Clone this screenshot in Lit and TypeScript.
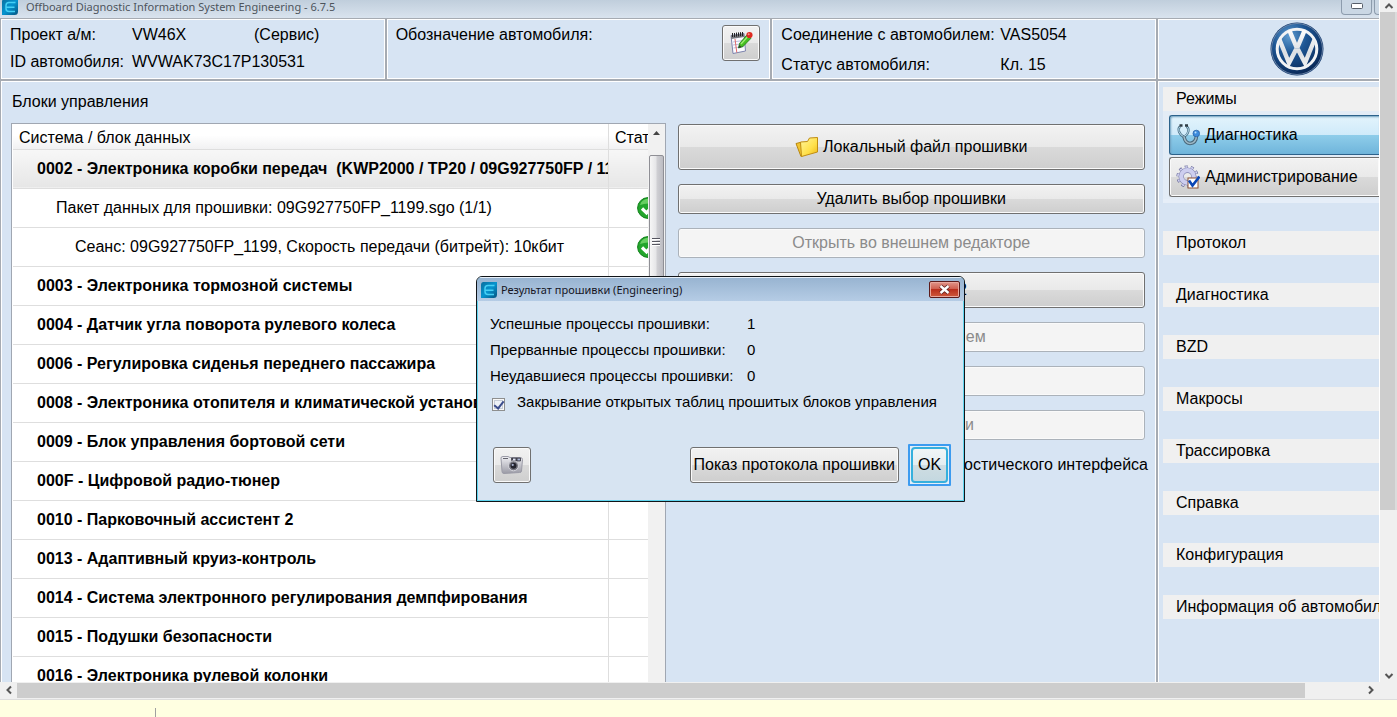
import { LitElement, html, css } from "lit";
import { customElement, property } from "lit/decorators.js";
import { classMap } from "lit/directives/class-map.js";

type Row = { text: string; level: number; selected?: boolean; ok?: boolean };

const ROWS: Row[] = [
  { text: "0002 - Электроника коробки передач  (KWP2000 / TP20 / 09G927750FP / 1199)", level: 0, selected: true },
  { text: "Пакет данных для прошивки: 09G927750FP_1199.sgo (1/1)", level: 1, ok: true },
  { text: "Сеанс: 09G927750FP_1199, Скорость передачи (битрейт): 10кбит", level: 2, ok: true },
  { text: "0003 - Электроника тормозной системы", level: 0 },
  { text: "0004 - Датчик угла поворота рулевого колеса", level: 0 },
  { text: "0006 - Регулировка сиденья переднего пассажира", level: 0 },
  { text: "0008 - Электроника отопителя и климатической установки", level: 0 },
  { text: "0009 - Блок управления бортовой сети", level: 0 },
  { text: "000F - Цифровой радио-тюнер", level: 0 },
  { text: "0010 - Парковочный ассистент 2", level: 0 },
  { text: "0013 - Адаптивный круиз-контроль", level: 0 },
  { text: "0014 - Система электронного регулирования демпфирования", level: 0 },
  { text: "0015 - Подушки безопасности", level: 0 },
  { text: "0016 - Электроника рулевой колонки", level: 0 },
];

const SECTIONS = ["Протокол", "Диагностика", "BZD", "Макросы", "Трассировка", "Справка", "Конфигурация", "Информация об автомобиле"];

const appIcon = html`<svg width="16" height="16" viewBox="0 0 16 16" aria-hidden="true">
  <defs><linearGradient id="a" x1="0" y1="0" x2="1" y2="1"><stop offset="0" stop-color="#0a6f9e"/><stop offset=".5" stop-color="#0594cf"/><stop offset="1" stop-color="#06537f"/></linearGradient></defs>
  <path d="M2.500 0H16V12.500Q16 16 12.500 16H0V3Q0 0 2.500 0Z" fill="url(#a)"/>
  <path d="M13.500 3.500H7Q4 3.500 4 6.500V9.500Q4 12.500 7 12.500H13M4.500 8.200H12.500" fill="none" stroke="#45d0f5" stroke-width="1.500"/>
</svg>`;

const noteIcon = html`<svg width="24" height="24" viewBox="0 0 24 24" aria-hidden="true">
  <path d="M2 4.500L15 2.500L16.500 20L4 22.500Z" fill="#fbfbff" stroke="#7d83ad"/>
  <path d="M2 4.500L15 2.500L15.300 6L2.300 8Z" fill="#77777d"/>
  <path d="M3.500 2V6M5.500 2V6M7.500 1.600V5.600M9.500 1.400V5.400M11.500 1.200V5.200M13.500 1V5" stroke="#222" stroke-width="1"/>
  <path d="M4 11L14 9.500M4 14L14.500 12.500M4.500 17L15 15.500" stroke="#b9bede"/>
  <path d="M6 8L7.800 21.500" stroke="#e26a6a"/>
  <path d="M9.500 17L10.500 12.500L18 3.800L22 7.300L14 15.500Z" fill="#45bf22" stroke="#1d7a10" stroke-width=".8"/>
  <path d="M12 13L19.500 4.800" stroke="#a1ee76" stroke-width="1.300"/>
  <path d="M9.500 17L10.300 14L12.500 15.900Z" fill="#333"/>
  <circle cx="20.500" cy="4" r="3.100" fill="#dd2a20"/><circle cx="19.700" cy="3.200" r="1" fill="#f99080"/>
</svg>`;

const vwLogo = html`<svg width="54" height="54" viewBox="0 0 54 54" role="img" aria-label="VW">
  <defs>
    <radialGradient id="v" cx=".35" cy=".25" r=".85"><stop offset="0" stop-color="#5f9bd0"/><stop offset=".4" stop-color="#1d5593"/><stop offset="1" stop-color="#06214e"/></radialGradient>
    <linearGradient id="w" gradientUnits="userSpaceOnUse" x1="0" y1="6" x2="0" y2="48"><stop offset="0" stop-color="#ffffff"/><stop offset=".6" stop-color="#dcdfe3"/><stop offset="1" stop-color="#f6f6f6"/></linearGradient>
    <clipPath id="c"><circle cx="27" cy="27" r="20"/></clipPath>
  </defs>
  <circle cx="27" cy="27" r="26.500" fill="#123a70"/>
  <circle cx="27" cy="27" r="25.500" fill="url(#v)" stroke="#8196b2" stroke-width=".8"/>
  <circle cx="27" cy="27" r="19.800" fill="none" stroke="#f2f3f5" stroke-width="3"/>
  <g clip-path="url(#c)" fill="none" stroke="url(#w)" stroke-width="4.400">
    <path d="M17.500 4L26 24H28L36.500 4"/>
    <path d="M6 9L19 41L25.500 28.500H28.500L35 41L48 9"/>
  </g>
</svg>`;

const stethoscope = html`<svg width="24" height="24" viewBox="0 0 24 24" aria-hidden="true">
  <path d="M4 3.500Q2 5 3 8.500Q5 13 7.500 13.500Q11 13 12.300 8.500Q13 5 10.500 3.500" fill="none" stroke="#4b7187" stroke-width="2.400"/>
  <path d="M4 3.500Q2 5 3 8.500Q5 13 7.500 13.500Q11 13 12.300 8.500Q13 5 10.500 3.500" fill="none" stroke="#b9dcee" stroke-width="1"/>
  <path d="M8 13.500Q9 20 14 20.500Q20 20 20.500 13" fill="none" stroke="#49687b" stroke-width="3.600"/>
  <path d="M8 13.500Q9 20 14 20.500Q20 20 20.500 13" fill="none" stroke="#9fb9c7" stroke-width="1.600"/>
  <path d="M3.500 2.500H6.500M9 2.500H12" stroke="#2e3b44" stroke-width="2.400"/>
  <circle cx="20.300" cy="10.500" r="3.300" fill="#3c8bdd" stroke="#2a62a5" stroke-width=".8"/><circle cx="19.500" cy="9.500" r="1" fill="#b8e0ff"/>
</svg>`;

const gear = html`<svg width="24" height="24" viewBox="0 0 24 24" aria-hidden="true">
  <circle cx="11.500" cy="11.500" r="9.600" fill="none" stroke="#6e6f9d" stroke-width="3" stroke-dasharray="3 3.030"/>
  <circle cx="11.500" cy="11.500" r="9.300" fill="none" stroke="#d3d4f2" stroke-width="2.200" stroke-dasharray="2.200 3.640" stroke-dashoffset="-.4"/>
  <circle cx="11.500" cy="11.500" r="6.300" fill="none" stroke="#7f80ad" stroke-width="5.400"/>
  <circle cx="11.500" cy="11.500" r="6.300" fill="none" stroke="#cdceef" stroke-width="4.200"/>
  <rect x="12" y="13" width="10" height="10" fill="#fff" stroke="#8a5034"/>
  <path d="M13 15.500L16.500 20.500L23.500 11.500" fill="none" stroke="#0b46b5" stroke-width="2.600"/>
</svg>`;

const folder = html`<svg width="24" height="22" viewBox="0 0 24 22" aria-hidden="true">
  <defs><linearGradient id="f" x1="0" y1="0" x2="1" y2="1"><stop offset="0" stop-color="#fff6a0"/><stop offset=".6" stop-color="#ffe04a"/><stop offset="1" stop-color="#eeb513"/></linearGradient></defs>
  <path d="M1 7.500L5 6.500L6 8L8 19.500L6 20.500Z" fill="#f2c531" stroke="#b8860f"/>
  <path d="M5.500 6L12.500 5.500L14.500 2L22.500 1.500V16L6.500 20.500Z" fill="url(#f)" stroke="#c08d12"/>
</svg>`;

const camera = html`<svg width="24" height="22" viewBox="0 0 24 22" aria-hidden="true">
  <defs><linearGradient id="k" x1="0" y1="0" x2="0" y2="1"><stop offset="0" stop-color="#f0f0f4"/><stop offset="1" stop-color="#9a9aa5"/></linearGradient></defs>
  <path d="M1 4Q1 2.500 3 2.500H8L10 3.500H20Q22.500 3.500 22.500 5.500L21.500 17Q21.500 18.500 19.500 18.500L4 19.500Q2 19.500 2 17.500Z" fill="url(#k)" stroke="#9b9ba7"/>
  <path d="M3 4.500H8M11.500 4H20.500V7H11.500Z" fill="#42424e" stroke="#42424e" stroke-width=".8"/>
  <rect x="13" y="4.600" width="2.500" height="1.800" fill="#dfe4f5"/><rect x="17.500" y="4.600" width="2.500" height="1.800" fill="#a9b4d4"/>
  <circle cx="13.500" cy="11.800" r="5" fill="#777781" stroke="#d5d5dc"/>
  <circle cx="13.500" cy="11.800" r="3" fill="#24242e"/><circle cx="12.700" cy="10.900" r="1.100" fill="#aab3cf"/>
</svg>`;

const okIcon = html`<svg width="22" height="22" viewBox="0 0 22 22" role="img" aria-label="OK">
  <circle cx="11" cy="11" r="10.400" fill="#23a52c" stroke="#0e8018"/>
  <path d="M3 8Q5 2 11 1.800Q17 2 19 8Q11 5 3 8Z" fill="#69cf63"/>
  <path d="M5 11.500L9.500 16L17 7" fill="none" stroke="#fff" stroke-width="3.200"/>
</svg>`;

const chevron = (d: string) =>
  html`<svg width="10" height="10" viewBox="0 0 10 10" aria-hidden="true"><path d=${d} fill="none" stroke="#555" stroke-width="2"/></svg>`;

const controls = css`
  :host { font: 16px/20px "Liberation Sans", Arial, sans-serif; color: #000; }
  * { box-sizing: border-box; }
  svg { display: block; flex: none; }
  .btn {
    display: flex; align-items: center; justify-content: center; gap: 4px;
    min-height: 30px; padding: 0 3px; font: inherit; color: #000; white-space: nowrap;
    border: 1px solid #707070; border-radius: 3px; box-shadow: inset 0 0 0 1px #fafafa;
    background: linear-gradient(#f2f2f2, #e9e9e9 50%, #dadada 50%, #cecece);
  }
  .btn:disabled { color: #8b8b8b; border-color: #abb2ba; background: #f4f4f4; }
  .icon { width: 38px; height: 36px; padding: 0; }
`;

@customElement("flash-dialog")
class FlashDialog extends LitElement {
  static styles = [controls, css`
    :host { display: block; border: 1px solid #101418; border-radius: 6px 6px 0 0; background: #d7e4f2; box-shadow: inset 0 0 0 1px #5fd4ee; overflow: hidden; }
    .title { display: flex; align-items: center; gap: 4px; height: 24px; padding: 0 4px; color: #15151f;
      font: 11px/16px "Noto Sans", "Open Sans", sans-serif; border-top: 1px solid #e9f1fa;
      background: linear-gradient(#98b4d1, #b5cce5); }
    .title span { flex: 1; }
    .close { width: 31px; height: 17px; padding: 0; display: grid; place-items: center; border: 1px solid #5c1b1b; border-radius: 2px;
      box-shadow: inset 0 0 0 1px #e9a79d; background: linear-gradient(#e0968b, #cf5c4c 48%, #b92f1d 50%, #cf5a3d); }
    .body { padding: 10px 13px 15px; display: flex; flex-direction: column; }
    dl { display: grid; grid-template-columns: 254px 1fr; margin: 0; font-size: 15px; line-height: 26px; white-space: nowrap; }
    dl > * { margin: 0; }
    dd { padding-left: 3px; }
    label { display: flex; align-items: center; gap: 12px; height: 26px; padding-left: 2px; font-size: 15px; white-space: nowrap; }
    input { appearance: none; flex: none; width: 13px; height: 13px; margin: 5px 0 0; border: 1px solid #8e8f8f; background: #eef2f8;
      box-shadow: inset 0 0 0 1px #f8f8f8, inset 0 0 0 2px #c6ccd6; display: grid; place-items: center; }
    input:checked::before { content: ""; width: 4px; height: 8px; border: solid #3b4c8c; border-width: 0 2px 2px 0; transform: rotate(38deg); margin-top: -2px; }
    .actions { display: flex; align-items: center; gap: 9px; margin-top: 29px; padding-left: 3px; }
    .push { margin-left: auto; height: 36px; }
    .ok { height: 42px; width: 43px; padding: 0; border: 2px solid #3c9bf0; outline: 0; border-radius: 1px;
      background: #e4eef8; box-shadow: none; }
    .ok span { display: grid; place-items: center; width: 37px; height: 36px; border: 2px solid #35b0dd; border-radius: 4px;
      background: linear-gradient(#f0f5f6, #e4eef1 50%, #cfdde2 50%, #c4d8e0); background-clip: padding-box; }
  `];
  render() {
    return html`
      <header class="title">${appIcon}<span>Результат прошивки (Engineering)</span>
        <button class="close" aria-label="Закрыть"><svg width="13" height="11" viewBox="0 0 13 11"><path d="M2.500 2L10.500 9M10.500 2L2.500 9" stroke="#5a2020" stroke-width="4"/><path d="M2.500 2L10.500 9M10.500 2L2.500 9" stroke="#fff" stroke-width="2.400"/></svg></button>
      </header>
      <div class="body">
        <dl>
          <dt>Успешные процессы прошивки:</dt><dd>1</dd>
          <dt>Прерванные процессы прошивки:</dt><dd>0</dd>
          <dt>Неудавшиеся процессы прошивки:</dt><dd>0</dd>
        </dl>
        <label><input type="checkbox" checked />Закрывание открытых таблиц прошитых блоков управления</label>
        <div class="actions">
          <button class="btn icon" aria-label="Снимок">${camera}</button>
          <button class="btn push">Показ протокола прошивки</button>
          <button class="btn ok"><span>OK</span></button>
        </div>
      </div>`;
  }
}

@customElement("unit-table")
class UnitTable extends LitElement {
  @property({ attribute: false }) rows: Row[] = [];
  static styles = [controls, css`
    :host { display: flex; overflow: hidden; border: 1px solid #a0a7b2; border-bottom: 0; background: #fff; }
    .view { flex: 1; min-width: 0; overflow: hidden; padding-left: 1px; }
    table { width: 100%; table-layout: fixed; border-collapse: collapse; }
    th, td { padding: 0; overflow: hidden; text-align: left; white-space: pre; font-weight: 400; border-bottom: 1px solid #dedede; }
    th:first-child, td:first-child { border-right: 1px solid #dedede; }
    th { height: 25px; padding: 3px 0 0 6px; background: linear-gradient(#fff 45%, #f1f1f2); }
    .state { width: 39px; }
    td { height: 39px; }
    .level0 { padding-left: 24px; font-weight: 700; }
    .level1 { padding-left: 43px; }
    .level2 { padding-left: 62px; }
    .selected td { background: linear-gradient(#f7f7f7, #e6e6e6); }
    .mark { padding-left: 28px; }
    .scroll { flex: none; width: 17px; background: #f1f1f1; display: flex; flex-direction: column; align-items: center; }
    .arrow { height: 31px; padding-top: 7px; }
    .thumb { width: 15px; height: 174px; display: grid; place-items: center; border: 1px solid #8f8f95; border-radius: 2px;
      background: linear-gradient(90deg, #f6f6f6, #e6e6e8 45%, #cfcfd3 55%, #bcbcc2); }
  `];
  render() {
    return html`
      <div class="view"><table>
        <thead><tr><th>Система / блок данных</th><th class="state">Статус</th></tr></thead>
        <tbody>${this.rows.map((r) => html`<tr class=${classMap({ selected: !!r.selected })}>
          <td class=${"level" + r.level}>${r.text}</td><td class="mark">${r.ok ? okIcon : ""}</td></tr>`)}</tbody>
      </table></div>
      <div class="scroll">
        <div class="arrow"><svg width="7" height="4" viewBox="0 0 7 4"><path d="M0 4L3.500 0L7 4Z" fill="#444"/></svg></div>
        <div class="thumb"><svg width="8" height="9" viewBox="0 0 8 9"><path d="M0 .5H8M0 3.500H8M0 6.500H8" stroke="#55555f"/><path d="M0 1.500H8M0 4.500H8M0 7.500H8" stroke="#fff"/></svg></div>
      </div>`;
  }
}

@customElement("app-root")
class AppRoot extends LitElement {
  static styles = [controls, css`
    :host { display: grid; grid-template: minmax(0, 1fr) 18px 17px / minmax(0, 1fr) 17px; height: 100vh; overflow: hidden; position: relative; background: #f0f0f0; }
    .window { display: flex; flex-direction: column; overflow: hidden; background: #d7e4f3; border-right: 1px solid #fff; }
    .title { flex: none; display: flex; align-items: center; gap: 8px; height: 18px; padding: 0 0 4px 2px; color: #4d545c;
      font: 11px/14px "Noto Sans", "Open Sans", sans-serif; background: linear-gradient(#c0cedc, #d9e3ee); }
    .title span { flex: 1; }
    .caps { display: flex; align-self: flex-start; gap: 2px; }
    .caps button { width: 31px; height: 15px; padding: 0 0 2px; display: grid; place-items: center; border: 1px solid #8d9cad; border-top: 0; border-radius: 0 0 4px 4px; background: #cad7e4; }
    .caps .cut { width: 5px; border-right: 0; border-radius: 0 0 0 4px; }
    .panels { flex: 1; min-height: 0; display: grid; grid-template: 60px minmax(0, 1fr) / minmax(0, 1fr) 221px; gap: 2px; padding: 1px 0 0 1px; background: #a6abb2; }
    .trio { display: grid; grid-template: minmax(0, 1fr) / repeat(3, minmax(0, 1fr)); gap: 2px; }
    .panel { background: #d7e4f3; border: 1px solid #fff; min-width: 0; }
    .edge { border-right: 0; overflow: hidden; }
    .facts { display: grid; align-content: start; white-space: nowrap; padding: 5px 8px 0; }
    .vehicle { grid-template-columns: 122px 122px 1fr; row-gap: 7px; }
    .vin { grid-column: 2 / -1; }
    .name { display: flex; justify-content: space-between; padding: 5px 9px 0 8px; }
    .link { grid-template-columns: 219px 1fr; row-gap: 10px; }
    .brand { display: flex; justify-content: center; padding: 2px 0 0 56px; }
    .main { display: flex; flex-direction: column; padding: 10px 10px 0 9px; border-bottom: 0; }
    h1 { margin: 0 0 11px; padding-left: 1px; font: inherit; }
    .cols { flex: 1; min-height: 0; display: grid; grid-template-columns: minmax(0, 7fr) minmax(0, 5fr); gap: 12px; }
    .tools { display: flex; flex-direction: column; gap: 14px; padding-top: 1px; }
    .tall { height: 46px; }
    .mid { height: 36px; }
    .note { margin: 1px -3px 0 0; text-align: right; white-space: nowrap; }
    .side { display: flex; flex-direction: column; padding: 5px 0 0 4px; border-bottom: 0; white-space: nowrap; }
    .modes { display: flex; flex-direction: column; gap: 2px; margin-bottom: 28px; padding: 0 0 2px; border: 1px solid #e6eef8; border-width: 0 0 4px 0; background: #e3ecf6; }
    h2 { margin: 0; padding: 2px 0 2px 13px; height: 24px; font: inherit; background: #f0f0f0; }
    .modes h2 { margin-bottom: 2px; }
    .mode { height: 40px; margin-left: 6px; padding: 0 6px; justify-content: flex-start; gap: 5px; border-right: 0; border-radius: 3px 0 0 3px; }
    .active { border-color: #2c628b; background: linear-gradient(#e3f4fc, #cfeafa 50%, #8fcdea 50%, #6fb5db); box-shadow: inset 1px 1px 2px #6f9fbe; }
    .sections { display: flex; flex-direction: column; gap: 28px; }
    .vbar { display: flex; flex-direction: column; align-items: center; background: #f0f0f0; }
    .vbar svg, .hbar svg { margin: 1px; }
    .vthumb { flex: 0 1 498px; width: 100%; background: #cdcdcd; border-right: 2px solid #dcdcdc; margin-bottom: auto; }
    .hbar { grid-column: 1 / -1; display: flex; align-items: center; padding: 0 20px 1px 3px; border-bottom: 1px solid #ddd; background: #f0f0f0; }
    .hthumb { flex: 0 1 1288px; height: 15px; background: #cdcdcd; margin: 0 auto 0 2px; }
    .status { grid-column: 1 / -1; display: flex; background: #ffffe1; padding: 8px 0 0 155px; }
    .status i { width: 1px; background: #a0a0a0; }
    flash-dialog { position: absolute; left: 476px; top: 276px; width: 489px; }
  `];
  render() {
    return html`
      <div class="window">
        <header class="title">${appIcon}<span>Offboard Diagnostic Information System Engineering - 6.7.5</span>
          <div class="caps"><button aria-label="Свернуть"><svg width="12" height="6" viewBox="0 0 12 6"><rect x=".5" y=".5" width="11" height="5" rx="1" fill="#fff" stroke="#555d68"/></svg></button><button class="cut" aria-label="Развернуть"></button></div>
        </header>
        <div class="panels">
          <div class="trio">
            <section class="panel facts vehicle"><span>Проект а/м:</span><span>VW46X</span><span>(Сервис)</span><span>ID автомобиля:</span><span class="vin">WVWAK73C17P130531</span></section>
            <section class="panel name"><span>Обозначение автомобиля:</span><button class="btn icon" aria-label="Изменить">${noteIcon}</button></section>
            <section class="panel facts link"><span>Соединение с автомобилем:</span><span>VAS5054</span><span>Статус автомобиля:</span><span>Кл. 15</span></section>
          </div>
          <section class="panel edge brand">${vwLogo}</section>
          <main class="panel main">
            <h1>Блоки управления</h1>
            <div class="cols">
              <unit-table .rows=${ROWS}></unit-table>
              <div class="tools">
                <button class="btn tall">${folder}Локальный файл прошивки</button>
                <button class="btn">Удалить выбор прошивки</button>
                <button class="btn" disabled>Открыть во внешнем редакторе</button>
                <button class="btn mid">Кодирование 2</button>
                <button class="btn" disabled>Файлы с описанием</button>
                <button class="btn" disabled>Сброс</button>
                <button class="btn" disabled>Протокол записи</button>
                <p class="note">Смена диагностического интерфейса</p>
              </div>
            </div>
          </main>
          <nav class="panel edge side">
            <div class="modes"><h2>Режимы</h2>
              <button class="btn mode active">${stethoscope}Диагностика</button>
              <button class="btn mode">${gear}Администрирование</button>
            </div>
            <div class="sections">${SECTIONS.map((s) => html`<h2>${s}</h2>`)}</div>
          </nav>
        </div>
      </div>
      <div class="vbar">${chevron("M1.500 7L5 3.500L8.500 7")}<div class="vthumb"></div>${chevron("M1.500 3L5 6.500L8.500 3")}</div>
      <div class="hbar">${chevron("M7 1.500L3.500 5L7 8.500")}<div class="hthumb"></div>${chevron("M3 1.500L6.500 5L3 8.500")}</div>
      <footer class="status"><i></i></footer>
      <flash-dialog role="dialog" aria-label="Результат прошивки"></flash-dialog>`;
  }
}
